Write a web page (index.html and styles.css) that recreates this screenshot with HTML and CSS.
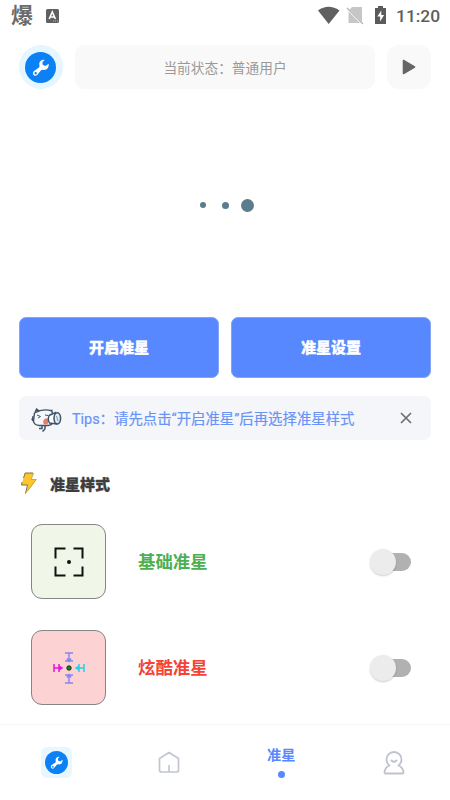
FILE: index.html
```html
<!DOCTYPE html>
<html lang="zh-CN">
<head>
<meta charset="utf-8">
<meta name="viewport" content="width=device-width">
<title>准星</title>
<link rel="stylesheet" href="styles.css">
</head>
<body>
<svg class="defs" width="0" height="0">
  <symbol id="wrench" viewBox="0 0 32 32">
    <circle cx="16" cy="16" r="16" fill="#0c80f5"/>
    <path fill="#fff" fill-rule="evenodd" d="M20.2 8.2c-3.6-.6-6.2 2.3-5.3 5.8.2.8.1 1.4-.5 1.9l-5 3.7c-3.2 2.3.3 6.8 3.2 4.2l3.8-4.6c.6-.7 1.2-.9 2-.7 3.7.8 6.7-2.3 6-6.3l-3.3 2.3-2.9-1.4-.2-2.6zM11 20.7a1.25 1.25 0 1 1-.01 2.5 1.25 1.25 0 0 1 .01-2.5z"/>
  </symbol>
</svg>
<div class="screen">
  <header class="status">
    <span class="status-char">爆</span>
    <svg class="status-a" width="13" height="14" viewBox="0 0 13 14"><rect width="13" height="14" rx="1.5" fill="#606060"/><path d="M3.2 10 6.3 3l3.1 7M4.4 8h3.8" fill="none" stroke="#fff" stroke-width="1.6"/><path d="M7 12h5" stroke="#bbb" stroke-dasharray="1 1"/></svg>
    <svg class="status-icons" width="70" height="20" viewBox="0 0 70 20">
      <path d="M0 4.5Q10.5-3 21.5 4.5L10.7 18z" fill="#606060"/>
      <path d="M34 1h10v15L31.500 3.500zM30.500 5.500v11.500h11.500z" fill="#c6c6c6"/>
      <path d="m29 2 16 16" stroke="#b5b5b5" stroke-width="1.3"/>
      <path d="M60 0h5v2h3v16H57V2h3z" fill="#5b5b5b"/>
      <path d="m63.3 4.5-4 6h2.800v5l4-6.500h-2.800z" fill="#fff"/>
    </svg>
    <span class="clock">11:20</span>
  </header>
  <main>
    <div class="top">
      <span class="avatar"><svg width="31" height="31"><use href="#wrench"/></svg></span>
      <span class="state">当前状态：普通用户</span>
      <span class="play"><svg width="14" height="16" viewBox="0 0 14 16"><path d="M1.5 1.5v13l11-6.5z" fill="#666" stroke="#666" stroke-width="1.6" stroke-linejoin="round"/></svg></span>
    </div>
    <div class="loader"><i class="dot"></i><i class="dot mid"></i><i class="dot big"></i></div>
    <div class="actions"><span class="btn">开启准星</span><span class="btn">准星设置</span></div>
    <div class="tips">
      <svg width="31" height="26" viewBox="0 0 31 26">
        <path d="M3.500 6Q12 1 21 4l1 11q-1 3-5 3.500H8Q3 18 2.500 14z" fill="#f6f7fa" stroke="#3f5267" stroke-width="1.400"/>
        <path d="m4 5 1.500-3.500L8.500 4M2 9 .8 13l2.200 2M19 3.500l2.500-.5" fill="#3f5267" stroke="#3f5267"/>
        <path d="m6 8 3.500 1.500L7 11m7-3 3 .5" fill="none" stroke="#3f5267"/>
        <path d="M13.500 12c2-1.500 4-.5 4 2l-1 3.500h-3c-2-1-1.500-4 0-5.500z" fill="#e47d6b"/>
        <path d="m18 8.500 6.500-3 1 11.500-7-1q-2-3-.5-7.500z" fill="#fff" stroke="#3f5267" stroke-width="1.400"/>
        <ellipse cx="26.300" cy="11.300" rx="3.300" ry="5.600" fill="#dfeaf3" stroke="#3f5267" stroke-width="1.500"/>
        <path d="M11 18.500v3H8m6-3v3.500m0 0-2.500 2.500" fill="none" stroke="#3f5267" stroke-width="1.500"/>
        <path d="m25.500 9 1.500 5" stroke="#7b9ab5"/>
      </svg>
      <span class="tips-text">Tips：请先点击“开启准星”后再选择准星样式</span>
      <svg width="12" height="12" viewBox="0 0 12 12"><path d="m1 1 10 10M11 1 1 11" stroke="#707070" stroke-width="1.700"/></svg>
    </div>
    <div class="section">
      <svg width="18" height="23" viewBox="0 0 18 23"><path d="M5 1h8.500L11 7.500h5.500L5.500 22 8 13H1.500z" fill="#fbc52c"/><path d="M13 1H5.200L3.500 6M2 10l-.5 3h6L5.500 21.500" fill="none" stroke="#776140" stroke-width=".9"/><path d="m13.500 1-2.200 6.500h5L7.500 19" fill="none" stroke="#b78d2a" stroke-width=".7"/></svg>
      <h2>准星样式</h2>
    </div>
    <div class="item basic">
      <span class="preview"><svg width="36" height="36" viewBox="0 0 36 36"><path d="M4.500 14.500V4.500h10m8 0h9v10m0 8v9h-9m-8 0h-10v-9" fill="none" stroke="#111" stroke-width="2"/><circle cx="18" cy="18" r="2" fill="#111"/></svg></span>
      <span class="name">基础准星</span>
      <span class="switch"><i></i></span>
    </div>
    <div class="item cool">
      <span class="preview"><svg width="36" height="36" viewBox="0 0 36 36" fill="none" stroke-width="1.500">
        <path d="M14 3h8m-4 0v8m-4 0h8m-6-2.500 2 3 2-3M14 33h8m-4 0v-8m-4 0h8m-6 2.500 2-3 2 3" stroke="#8585f5"/>
        <path d="M3 14v8m0-4h8m-3-4v8m0-6 3 2-3 2" stroke="#e416df"/>
        <path d="M33 14v8m0-4h-8m3-4v8m0-6-3 2 3 2" stroke="#22d2e8"/>
        <circle cx="18" cy="18" r="2.200" fill="#188b18" stroke="#172c17" stroke-width="1"/></svg></span>
      <span class="name">炫酷准星</span>
      <span class="switch"><i></i></span>
    </div>
  </main>
  <nav>
    <span class="tab"><span class="tab-tool"><svg width="23" height="23"><use href="#wrench"/></svg></span></span>
    <span class="tab"><svg width="22" height="23" viewBox="0 0 22 23" fill="none" stroke="#c1c6d3" stroke-width="1.700" stroke-linejoin="round" stroke-linecap="round"><path d="M1.500 7.500 11 1.500l9.500 6V19q0 2-2 2h-15q-2 0-2-2zM11 14.500V21"/></svg></span>
    <span class="tab active"><b>准星</b><i></i></span>
    <span class="tab"><svg width="22" height="24" viewBox="0 0 22 24" fill="none" stroke="#bfc3cd" stroke-width="1.800" stroke-linejoin="round" stroke-linecap="round"><path d="M6.500 14.500a7.500 7.500 0 1 1 9 0c3 1.200 4.800 3.500 5 7q0 1-1 1h-17q-1 0-1-1c.2-3.500 2-5.800 5-7zM8.500 9.500q2.500 2.500 5 0"/></svg></span>
  </nav>
</div>
</body>
</html>
```
FILE: styles.css
```css
* { box-sizing: border-box; }
body { margin: 0; background: #fff; font-family: Roboto, "Noto Sans CJK SC", sans-serif; }
.defs { position: absolute; }
svg { display: block; flex: none; }
.screen { width: 450px; height: 800px; display: flex; flex-direction: column; overflow: hidden; }
.status { height: 31px; flex: none; display: flex; align-items: center; padding: 0 11px 0 11px; color: #5e5e5e; }
.status-char { font-size: 22px; line-height: 30px; font-weight: 700; color: #6a6a6a; }
.status-a { margin-left: 13px; }
.status-icons { margin: 0 8px 0 auto; }
.clock { font-size: 17.4px; font-weight: 500; width: 43px; white-space: nowrap; }
main { flex: 1; min-height: 0; padding: 14px 19px 0; }
.top { display: flex; gap: 12px; height: 44px; }
.avatar { width: 44px; height: 44px; border-radius: 50%; background: #e5f6fe; display: flex; align-items: center; justify-content: center; flex: none; }
.avatar svg { margin-right: 1px; }
.state { width: 300px; border-radius: 9px; background: #f9f9f9; color: #999; font-size: 13.7px; line-height: 46px; text-align: center; }
.play { width: 44px; border-radius: 12px; background: #f9f9f9; display: flex; align-items: center; justify-content: center; }
.loader { height: 228px; display: flex; align-items: center; padding: 4px 0 0 181px; }
.dot { width: 6px; height: 6px; border-radius: 50%; background: #5a7c8c; }
.dot.mid { width: 7px; height: 7px; margin-left: 16px; }
.dot.big { width: 13px; height: 13px; margin-left: 12px; }
.actions { display: flex; gap: 12px; }
.btn { width: 201px; height: 61px; border: 1px solid #86a4f3; border-radius: 7px; background: #5788ff; color: #fff; font-size: 15px; font-weight: 900; line-height: 60px; text-align: center; -webkit-text-stroke: .3px #fff; }
.tips { margin-top: 18px; width: 412px; height: 44px; border-radius: 7px; background: #f4f6fa; display: flex; align-items: center; padding: 0 19px 0 12px; }
.tips svg:first-child { margin-top: 4px; }
.tips-text { flex: 1; margin-left: 10px; font-size: 14.4px; line-height: 40px; padding-top: 3px; color: #6a93f8; white-space: nowrap; -webkit-text-stroke: .2px #6a93f8; }
.section { display: flex; align-items: center; gap: 12px; height: 23px; margin: 32px 0 29px 1px; }
h2 { margin: 0; font-size: 15px; line-height: 24px; padding-top: 2px; font-weight: 900; color: #3d3d3d; -webkit-text-stroke: .3px #3d3d3d; }
.item { display: flex; align-items: center; height: 75px; padding: 0 19px 0 12px; margin-bottom: 31px; }
.preview { width: 75px; height: 75px; border: 1.500px solid #858585; border-radius: 11px; display: flex; align-items: center; justify-content: center; }
.basic .preview { background: #f0f6e8; }
.cool .preview { background: #fcd3d2; }
.name { margin-left: 32px; font-size: 17.4px; line-height: 26px; font-weight: 700; color: #4caf50; }
.cool .name { color: #f44336; }
.switch { width: 38px; height: 18px; margin: 0 1px 0 auto; border-radius: 9px; background: #b1b1b1; position: relative; }
.switch i { position: absolute; left: -3px; top: -4px; width: 26px; height: 26px; border-radius: 50%; background: #ececec; box-shadow: 0 1px 2px rgba(0,0,0,.2); }
nav { height: 76px; flex: none; border-top: 1px solid #f6f6f6; display: grid; grid-template-columns: repeat(4, 1fr); }
.tab { display: flex; flex-direction: column; align-items: center; justify-content: center; }
.tab-tool { width: 31px; height: 31px; border-radius: 6px; background: #e8f7fe; display: flex; align-items: center; justify-content: center; }
.active b { font-size: 14.2px; line-height: 20px; font-weight: 700; color: #5788ff; }
.active i { width: 7px; height: 7px; margin: 6px 0 3px; border-radius: 50%; background: #5788ff; }
```
